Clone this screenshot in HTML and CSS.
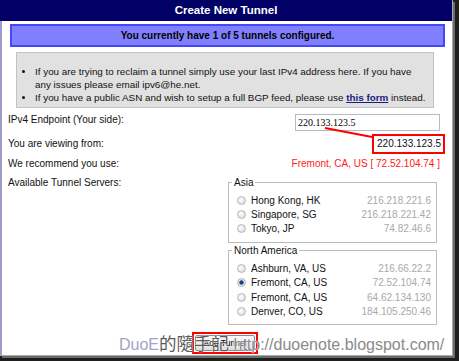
FILE: index.html
```html
<!DOCTYPE html>
<html>
<head>
<meta charset="utf-8">
<link rel="stylesheet" href="styles.css">
</head>
<body>
<div class="shot">
  <div class="page">
    <div class="title">Create New Tunnel</div>
    <div class="body">
      <div class="notice">You currently have 1 of 5 tunnels configured.</div>
      <div class="info">
        <ul>
          <li>If you are trying to reclaim a tunnel simply use your last IPv4 address here. If you have<br>any issues please email ipv6@he.net.</li>
          <li>If you have a public ASN and wish to setup a full BGP feed, please use <a class="link" href="#">this form</a> instead.</li>
        </ul>
      </div>
      <div class="form">
        <div class="lbl l1">IPv4 Endpoint (Your side):</div>
        <div class="val v1"><input class="ip" type="text" value="220.133.123.5"></div>
        <div class="lbl l2">You are viewing from:</div>
        <div class="val v2"><span class="boxed">220.133.123.5</span></div>
        <div class="lbl l3">We recommend you use:</div>
        <div class="val v3"><span class="rec">Fremont, CA, US [ 72.52.104.74 ]</span></div>
        <div class="lbl l4">Available Tunnel Servers:</div>
        <div class="servers">
          <fieldset class="region">
            <legend>Asia</legend>
            <label class="srv"><input type="radio" name="srv"><span class="city">Hong Kong, HK</span><span class="addr">216.218.221.6</span></label>
            <label class="srv"><input type="radio" name="srv"><span class="city">Singapore, SG</span><span class="addr">216.218.221.42</span></label>
            <label class="srv"><input type="radio" name="srv"><span class="city">Tokyo, JP</span><span class="addr">74.82.46.6</span></label>
          </fieldset>
          <fieldset class="region na">
            <legend>North America</legend>
            <label class="srv"><input type="radio" name="srv"><span class="city">Ashburn, VA, US</span><span class="addr">216.66.22.2</span></label>
            <label class="srv"><input type="radio" name="srv" checked><span class="city">Fremont, CA, US</span><span class="addr">72.52.104.74</span></label>
            <label class="srv"><input type="radio" name="srv"><span class="city">Fremont, CA, US</span><span class="addr">64.62.134.130</span></label>
            <label class="srv"><input type="radio" name="srv"><span class="city">Denver, CO, US</span><span class="addr">184.105.250.46</span></label>
          </fieldset>
        </div>
      </div>
      <div class="actions"><span class="mark"><button class="add">Add Tunnel</button></span></div>
    </div>
    <svg class="annot" width="453" height="356" viewBox="0 0 453 356"><line x1="325" y1="128" x2="372" y2="137" stroke="#ff0000" stroke-width="2"/></svg>
    <div class="watermark"><span class="wm-a">DuoE</span><span class="wm-b">的隨手記</span> <span class="wm-c">http://duoenote.blogspot.com/</span></div>
  </div>
</div>
</body>
</html>
```
FILE: styles.css
```css
html, body {
  margin: 0;
  padding: 0;
}
body {
  font-family: "Liberation Sans", Arial, sans-serif;
  font-size: 10px;
  color: #111;
}
.shot {
  width: 459px;
  height: 361px;
  background: #1e1e1e;
  position: relative;
  overflow: hidden;
}
.page {
  width: 452px;
  height: 355px;
  background: #fff;
  border-right: 1px solid #a9a9a9;
  border-bottom: 1px solid #a9a9a9;
  box-shadow: 2px 2px 0 #6b6b6b;
  position: relative;
  display: flex;
  flex-direction: column;
}
.title {
  height: 21px;
  line-height: 21px;
  background: #000066;
  color: #fff;
  font-weight: bold;
  font-size: 11.5px;
  text-align: center;
}
.body {
  flex: 1;
  border-left: 2px solid #9d9cc9;
  padding: 3px 7px 0 8px;
}
.notice {
  height: 19px;
  line-height: 19px;
  border: 2px solid #4646ff;
  background: #8080ff;
  font-weight: bold;
  text-align: center;
  color: #000;
}
.info {
  margin: 5px 11px 0 6px;
  background: #e1e1e1;
  border: 1px solid #c3c3c3;
  padding: 12px 4px 3px 18px;
  font-size: 9.85px;
}
.info ul {
  margin: 0;
  padding: 0;
}
.info li {
  line-height: 13px;
  white-space: nowrap;
}
.link {
  color: #1a1a80;
  font-weight: bold;
  text-decoration: underline;
}
.form {
  margin: 5px 5px 0 -2px;
  display: grid;
  grid-template-columns: 220px 1fr;
  grid-template-rows: 20px 22px 17px auto;
}
.lbl {
  line-height: 14px;
}
.l2, .l3 {
  align-self: center;
}
.l4 {
  margin-top: 4px;
  line-height: 13px;
}
.val {
  display: flex;
  justify-content: flex-end;
  align-items: center;
}
.v1 {
  align-items: flex-start;
}
.ip {
  margin: 1px 0 0 0;
  width: 145px;
  height: 17px;
  box-sizing: border-box;
  border: 1px solid #b5bcc6;
  padding: 0 2px;
  font-family: "Liberation Serif", "Times New Roman", serif;
  font-size: 10px;
  color: #000;
}
.boxed {
  display: inline-block;
  border: 2px solid #ff0000;
  padding: 0 2px 0 3px;
  line-height: 16px;
  margin-right: -5px;
  color: #111;
}
.rec {
  color: #ff1a1a;
}
.servers {
  display: flex;
  flex-direction: column;
}
.region {
  margin: 4px 3px 0 0;
  padding: 4.5px 5px 6px 7px;
  border: 1px solid #bcbcbc;
}
.region.na {
  margin-top: 1px;
}
.region legend {
  padding: 0 2px;
  margin-left: -4px;
  line-height: 13px;
}
.srv {
  display: flex;
  align-items: center;
  height: 14.2px;
}
.srv input {
  -webkit-appearance: none;
  appearance: none;
  width: 9px;
  height: 9px;
  margin: 0 5px 0 1px;
  border-radius: 50%;
  border: 1px solid #b8b8b8;
  background: radial-gradient(circle at 40% 40%, #ffffff 0, #e4e4e4 60%, #cfcfcf 100%);
  box-sizing: border-box;
}
.srv input:checked {
  background: radial-gradient(circle, #14306e 0, #2a4f95 1.8px, #dfe6f0 2.6px, #d0d0d0 100%);
}
.addr {
  margin-left: auto;
  color: #a9a9a9;
}
.actions {
  text-align: center;
  margin-top: 7px;
  padding-right: 5px;
}
.mark {
  display: inline-block;
  border: 2px solid #ff0000;
  padding: 1px;
  line-height: 0;
}
.add {
  width: 60px;
  height: 16px;
  padding: 0;
  border: 1px solid #8a8a8a;
  border-radius: 2px;
  background: linear-gradient(#fbfbfb, #dedede);
  font-family: "Liberation Sans", Arial, sans-serif;
  font-size: 8.5px;
  color: #000;
}
.annot {
  position: absolute;
  left: 0;
  top: 0;
  pointer-events: none;
}
.watermark {
  position: absolute;
  left: 119px;
  top: 333px;
  line-height: 20px;
  font-size: 16px;
  white-space: nowrap;
  font-family: "Liberation Sans", Arial, "Noto Sans CJK TC", sans-serif;
  text-shadow: 0 0 1px #fff, 0 0 1px #fff;
  pointer-events: none;
}
.wm-a {
  color: #a3a3c6;
}
.wm-b {
  color: #5a5a5a;
  font-family: "Noto Sans CJK TC", sans-serif;
  font-size: 17.5px;
}
.wm-c {
  color: #8a8a8a;
}
```
